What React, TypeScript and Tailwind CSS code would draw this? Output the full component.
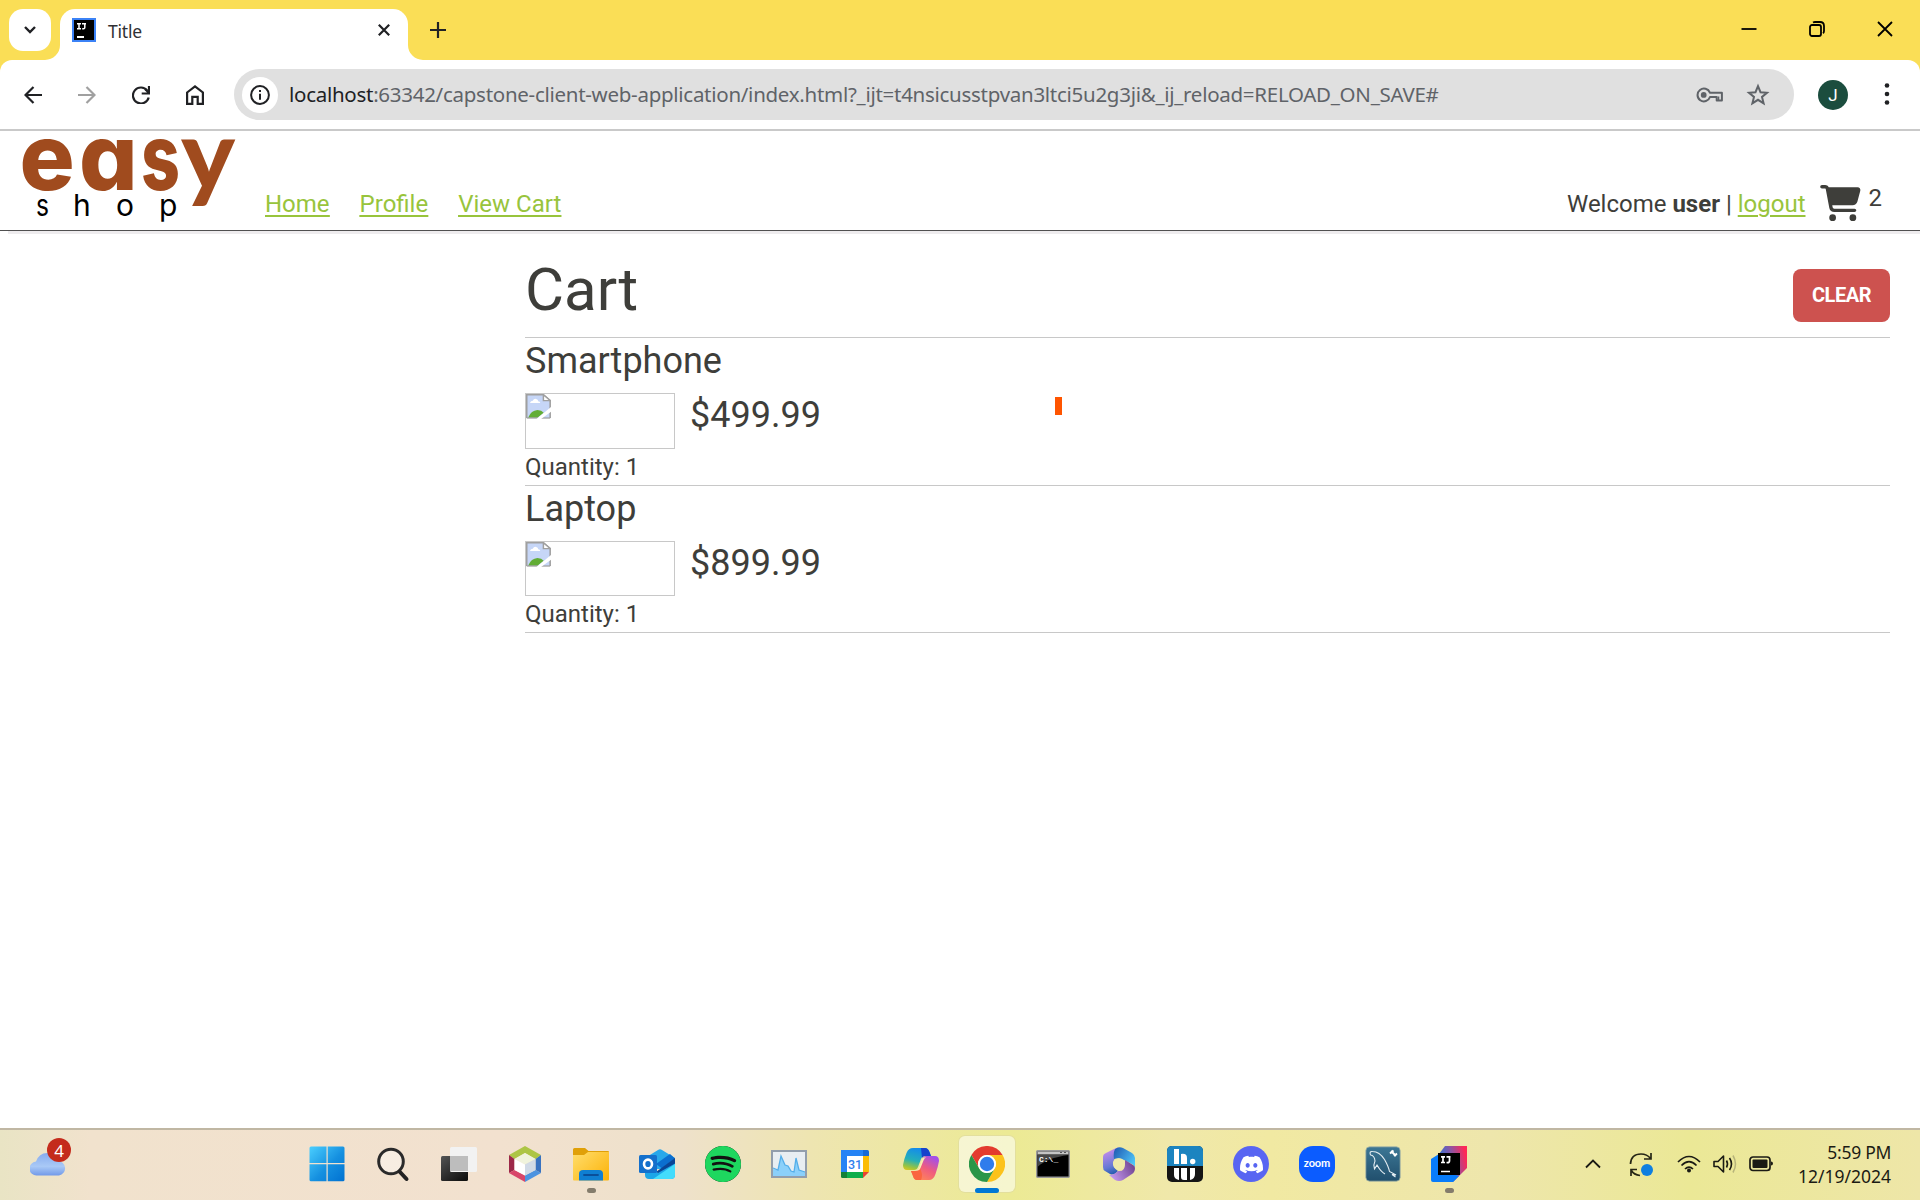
import React from "react";
import { FaCartShopping } from "react-icons/fa6";
import { SiDiscord, SiSpotify } from "react-icons/si";

const Svg = ({ w, h, children, className }: { w: number; h: number; children: React.ReactNode; className?: string }) => (
  <svg width={w} height={h} viewBox={`0 0 ${w} ${h}`} fill="none" className={className ?? "block shrink-0"}>
    {children}
  </svg>
);

function TabStrip() {
  return (
    <div className="flex h-[60px] bg-[#fade56] pl-[9px] pt-[9px]">
      <button className="flex size-[42px] items-center justify-center rounded-[14px] bg-white">
        <Svg w={14} h={10}><path d="M2 2l5 5 5-5" stroke="#202124" strokeWidth="2.4" /></Svg>
      </button>
      <div className="relative ml-[9px] flex h-[51px] w-[348px] rounded-t-[15px] bg-white pl-3">
        <svg className="absolute -left-[15px] bottom-0" width="15" height="15"><path d="M15 0v15H0A15 15 0 0 0 15 0z" fill="#fff" /></svg>
        <svg className="absolute -right-[15px] bottom-0" width="15" height="15"><path d="M0 0v15h15A15 15 0 0 1 0 0z" fill="#fff" /></svg>
        <div className="mt-[9px]">
          <Svg w={24} h={24}>
            <path d="M0 0h24v24H0z" fill="#3b82f6" />
            <path d="M2 2h20v20H2z" fill="#000" />
            <path d="M5 5.700h4M7 5v6M5 10.700h4M10 5.700h4M12.800 5v4.500q0 1.500-2.600 1.300" stroke="#fff" strokeWidth="1.500" />
            <path d="M5 18h7v2H5z" fill="#fff" />
          </Svg>
        </div>
        <span className="ml-3 mt-[10px] font-['Noto_Sans',sans-serif] text-[17.5px] leading-6 tracking-[-0.2px] text-[#303134]">Title</span>
        <div className="ml-auto mr-[17px] mt-[14px]">
          <Svg w={14} h={14}><path d="M1.800 1.800l10.400 10.400M12.200 1.800L1.800 12.200" stroke="#202124" strokeWidth="2.200" /></Svg>
        </div>
      </div>
      <div className="ml-[22px] mt-[13px]">
        <Svg w={16} h={16}><path d="M8 0v16M0 8h16" stroke="#202124" strokeWidth="2.200" /></Svg>
      </div>
      <div className="ml-auto mr-[27px] flex gap-[52px] pt-[12px]">
        <Svg w={16} h={16}><path d="M0.500 8h15" stroke="#000" strokeWidth="1.800" /></Svg>
        <Svg w={16} h={16}>
          <rect x="1" y="4" width="11" height="11" rx="2" stroke="#000" strokeWidth="1.800" />
          <path d="M4 1.600Q5 1 6 1h5q4 0 4 4v5q0 1.500-1 2.200" stroke="#000" strokeWidth="1.800" />
        </Svg>
        <Svg w={16} h={16}><path d="M1 1l14 14M15 1L1 15" stroke="#000" strokeWidth="1.800" /></Svg>
      </div>
    </div>
  );
}

function Toolbar() {
  return (
    <div className="bg-[#fade56]">
      <div className="flex h-[71px] items-start rounded-t-[12px] border-b-2 border-[#c9c9c9] bg-white pt-[9px]">
        <div className="flex h-[51px] items-center gap-9 pl-6">
          <Svg w={18} h={18}><path d="M18 9H2M9.500 1L1.500 9l8 8" stroke="#202124" strokeWidth="2.200" /></Svg>
          <Svg w={18} h={18}><path d="M0 9h16M8.500 1l8 8-8 8" stroke="#a0a0a0" strokeWidth="2.200" /></Svg>
          <Svg w={18} h={18}>
            <path d="M15.300 4.600A8 8 0 1 0 16.700 11.500" stroke="#202124" strokeWidth="2.200" />
            <path d="M17 0v7.500h-7.300M16.500 6.500L13 3" stroke="#202124" strokeWidth="2.200" />
          </Svg>
          <Svg w={18} h={20}>
            <path d="M1.100 7.500L9 1.400l7.900 6.100v11.400h-5.200v-7H6.300v7H1.100z" stroke="#202124" strokeWidth="2.200" />
          </Svg>
        </div>
        <div className="ml-[30px] flex h-[51px] w-[1560px] items-center rounded-full bg-[#e0e0e0] pl-2">
          <div className="flex size-9 items-center justify-center rounded-full bg-white">
            <Svg w={20} h={20}>
              <circle cx="10" cy="10" r="8.900" stroke="#202124" strokeWidth="2" />
              <path d="M10 8.700v6M10 5v2.100" stroke="#202124" strokeWidth="2" />
            </Svg>
          </div>
          <span className="mb-[2px] ml-[11px] whitespace-nowrap font-['Noto_Sans',sans-serif] text-[20.500px] leading-7 tracking-[-0.275px] text-[#5f6368]">
            <span className="text-[#202124]">localhost</span>:63342/capstone-client-web-application/index.html?_ijt=t4nsicusstpvan3ltci5u2g3ji&amp;_ij_reload=RELOAD_ON_SAVE#
          </span>
          <div className="ml-auto flex items-center gap-[22px] pr-[24px]">
            <Svg w={28} h={16}>
              <path d="M13.900 5.700H25.900v7.800h-5.200v-3.500h-6.700a6.400 6.400 0 1 1 -.1-4.300z" stroke="#5f6368" strokeWidth="2" strokeLinejoin="round" />
              <path d="M22.500 9.500v4" stroke="#5f6368" strokeWidth="1.600" />
              <circle cx="7.700" cy="7.900" r="2.900" fill="#5f6368" />
            </Svg>
            <Svg w={24} h={24}>
              <path d="M12 3.200l2.500 6 6.500.5-5 4.200 1.600 6.400L12 16.800l-5.600 3.500L8 13.900 3 9.700l6.500-.5z" stroke="#5f6368" strokeWidth="2" />
            </Svg>
          </div>
        </div>
        <div className="ml-6 mt-[11px] flex size-[30px] items-center justify-center rounded-full bg-[#1b4d3e] text-[17px] leading-none text-white">J</div>
        <div className="ml-[36px] mt-[14px]">
          <Svg w={6} h={22}>
            <circle cx="3" cy="2.500" r="2.300" fill="#202124" /><circle cx="3" cy="11" r="2.300" fill="#202124" /><circle cx="3" cy="19.500" r="2.300" fill="#202124" />
          </Svg>
        </div>
      </div>
    </div>
  );
}

function SiteHeader() {
  return (
    <header className="flex h-[100px] shrink-0 items-start border-b border-[#505050] text-2xl leading-7 shadow-[8px_3px_0_#eeecee]">
      <svg width="240" height="98" viewBox="0 131 240 98" className="shrink-0 overflow-visible font-['Inter',sans-serif]">
        <g fill="#a04b1e" fontSize="92" fontWeight="800" style={{ fontFeatureSettings: '"cv11"' }}>
          <text y="190" x="19.500">e</text><text y="190" x="79">a</text><text y="190" x="141" textLength="39" lengthAdjust="spacingAndGlyphs">s</text>
          <text y="190" x="181" textLength="54" lengthAdjust="spacingAndGlyphs" fontFamily="Lato" fontSize="98" fontWeight="900">y</text>
        </g>
        <g fill="#000" fontSize="30" fontWeight="400">
          <text y="216" x="36" textLength="13" lengthAdjust="spacingAndGlyphs">s</text><text y="216" x="73">h</text><text y="216" x="116">o</text><text y="216" x="159">p</text>
        </g>
      </svg>
      <nav className="ml-[25px] mt-[59px] flex gap-[30px] text-[#98c43c] underline decoration-2 underline-offset-[3px]">
        <a>Home</a><a>Profile</a><a>View Cart</a>
      </nav>
      <div className="ml-auto mr-[38px] flex">
        <span className="mt-[59px] whitespace-pre">Welcome <b className="font-bold">user</b> | <a className="text-[#98c43c] underline decoration-2 underline-offset-[3px]">logout</a></span>
        <FaCartShopping className="ml-[14px] mt-[54px] h-[36px] w-[41px]" />
        <span className="ml-[8px] mt-[53px]">2</span>
      </div>
    </header>
  );
}

const BrokenImage = () => (
  <svg width="25" height="25" viewBox="0 0 24 28" preserveAspectRatio="none" fill="none" className="block">
    <path d="M.700.800h16l6.500 6.500v19.500H.700z" fill="#c6d6f7" />
    <path d="M4 9.500q.500-2 2.500-2 1-2.500 3.200-2 2 .5 2 2.500 2 0 2 2H4z" fill="#fff" />
    <path d="M2 26.500q3-8 9-8.500 4 0 6 3l-6 5.500z" fill="#62ad35" />
    <path d="M.700 27V.800h16l6.500 6.500V27" stroke="#a0a0a0" strokeWidth="1.500" />
    <path d="M16.700.800v6.500h6.500z" fill="#fff" stroke="#a0a0a0" strokeWidth="1.400" />
    <path d="M.700 26.900h22.500" stroke="#a0a0a0" strokeWidth="1.400" />
    <path d="M24 14.500L10 28h4.500L24 20z" fill="#fff" />
  </svg>
);

const items = [
  { name: "Smartphone", price: "$499.99", row: "h-[148px]", box: "h-[56px]" },
  { name: "Laptop", price: "$899.99", row: "h-[147px]", box: "h-[55px]" },
];

function CartPage() {
  return (
    <main className="relative ml-[525px] flex-1 pr-[30px]">
      <div className="flex h-[107px] items-start justify-between border-b border-[#c8c8c8] pt-[23px]">
        <h1 className="text-[60px] leading-[72px]">Cart</h1>
        <button className="mt-[15px] h-[53px] w-[97px] rounded-[8px] bg-[#cd524f] pb-[2px] text-[20px] font-bold tracking-[-0.45px] text-white">CLEAR</button>
      </div>
      {items.map((item) => (
        <div key={item.name} className={`${item.row} border-b border-[#c8c8c8]`}>
          <h2 className="pt-[2px] text-[36px] leading-[42px]">{item.name}</h2>
          <div className="mt-[11px] flex">
            <div className={`${item.box} w-[150px] border border-[#c8c8c8]`}><BrokenImage /></div>
            <span className="ml-[15px] mt-px text-[36px] leading-[42px]">{item.price}</span>
          </div>
          <div className="mt-[4px] text-2xl leading-7">Quantity: 1</div>
        </div>
      ))}
      <div className="absolute left-[530px] top-[166px] h-[18px] w-[7px] bg-[#ff5500]" />
    </main>
  );
}

const apps: { key: string; icon: React.ReactNode; mark?: "dot" | "active" }[] = [
  {
    key: "start",
    icon: (
      <Svg w={36} h={36}>
        <defs><linearGradient id="win" x1="0" y1="0" x2="36" y2="36" gradientUnits="userSpaceOnUse"><stop stopColor="#4cd0ff" /><stop offset=".55" stopColor="#1590e0" /><stop offset="1" stopColor="#0070d0" /></linearGradient></defs>
        <path d="M2 .500h15.500v16.500H.500V2q0-1.500 1.500-1.500zM18.700.500H34q1.500 0 1.500 1.500v15H18.700zM.500 18.300h17v17H2q-1.500 0-1.500-1.500zM18.700 18.300h16.800v15.500q0 1.500-1.500 1.500H18.700z" fill="url(#win)" />
      </Svg>
    ),
  },
  {
    key: "search",
    icon: (
      <Svg w={36} h={36}>
        <circle cx="16" cy="15.500" r="12.300" fill="#fff" fillOpacity=".4" stroke="#2a2a2a" strokeWidth="3" />
        <path d="M24.500 25.500l7 7.500" stroke="#222" strokeWidth="4" strokeLinecap="round" />
      </Svg>
    ),
  },
  {
    key: "taskview",
    icon: (
      <Svg w={36} h={36}>
        <defs><linearGradient id="tv" x1="0" y1="9" x2="20" y2="36" gradientUnits="userSpaceOnUse"><stop stopColor="#555" /><stop offset="1" stopColor="#111" /></linearGradient></defs>
        <rect x="0" y="10" width="27" height="25" rx="1.500" fill="url(#tv)" />
        <rect x="9" y="1" width="27" height="25" rx="1.500" fill="#f2f2f2" />
        <path d="M9 10h18v15H9z" fill="#bdbdbd" />
      </Svg>
    ),
  },
  {
    key: "netbeans",
    icon: (
      <Svg w={34} h={36}>
        <path d="M17 0l16 9-5.500 4L17 7 6.500 13 1 9z" fill="#adc545" />
        <path d="M1 9l5.500 4v11L1 27z" fill="#9c2848" />
        <path d="M1 27l5.500-3L17 29.500V36z" fill="#d8466a" />
        <path d="M33 27l-5.500-3L17 29.500V36z" fill="#4c93e0" />
        <path d="M33 9l-5.500 4v11l5.500 3z" fill="#3872c0" />
        <path d="M17 7l10.500 6L17 18.500 6.500 13z" fill="#f0f3dc" />
        <path d="M6.500 13L17 18.500v11L6.500 24z" fill="#fff" />
        <path d="M27.500 13L17 18.500v11L27.500 24z" fill="#d0dae6" />
      </Svg>
    ),
  },
  {
    key: "explorer",
    mark: "dot",
    icon: (
      <Svg w={36} h={36}>
        <defs><linearGradient id="fe" x1="0" y1="4" x2="30" y2="36" gradientUnits="userSpaceOnUse"><stop stopColor="#ffdf70" /><stop offset="1" stopColor="#fcb50e" /></linearGradient></defs>
        <path d="M0 3.500Q0 2 1.500 2H12l3.500 3H35q1 0 1 1v4H0z" fill="#e0a008" />
        <path d="M0 9h11l4-3h21v27.500q0 1-1 1H1q-1 0-1-1z" fill="url(#fe)" />
        <path d="M6 34.500V28q0-4 4-4h16q4 0 4 4v6.500z" fill="#0f7fd2" />
        <path d="M11 29h14" stroke="#0a4f9a" strokeWidth="1.800" strokeLinecap="round" />
      </Svg>
    ),
  },
  {
    key: "outlook",
    icon: (
      <Svg w={36} h={36}>
        <path d="M6 12L19 4q2-1.300 4 0l13 8-14 11H6z" fill="#28a8ea" />
        <path d="M17 18L31 8l5 4.500-13 10z" fill="#0b6fd0" />
        <path d="M17 26L36 12v8l-14 9z" fill="#0a4596" />
        <path d="M6 19l13 8 17-9.500V29q0 4-4 4H10q-4 0-4-4z" fill="#1ca6e8" />
        <path d="M14 33l22-15v11q0 4-4 4z" fill="#43dcfc" />
        <rect x="0" y="9" width="18" height="18" rx="1.500" fill="#1470cc" />
        <ellipse cx="9" cy="18" rx="4" ry="4.400" stroke="#fff" strokeWidth="2.600" />
      </Svg>
    ),
  },
  { key: "spotify", icon: <div className="rounded-full bg-[#121212]"><SiSpotify className="size-9 text-[#1ed75f]" /></div> },
  {
    key: "monitor",
    icon: (
      <Svg w={36} h={36}>
        <rect x="1" y="5" width="34" height="26" fill="#e8eef2" stroke="#929eac" strokeWidth="2" />
        <path d="M2 30v-7l5 1 3-14 4 9 3 1 3 5 3 1 2-14 3 12 6 2v4z" fill="#8bd0fa" />
        <path d="M2 22l5 2 3-14 4 9 3 1 3 5 3 1 2-14 3 12 6 2" stroke="#54aee9" strokeWidth="1.300" />
      </Svg>
    ),
  },
  {
    key: "calendar",
    icon: (
      <Svg w={30} h={30}>
        <path d="M1.500 1H23v6H1v-4.500Q1 1 1.500 1z" fill="#2583f5" /><path d="M1 1h6v22H1z" fill="#2583f5" />
        <path d="M23 1h4.500Q29 1 29 2.500V7h-6z" fill="#1769d8" /><path d="M23 7h6v16h-6z" fill="#fbbc04" />
        <path d="M1 23h6v6H2.500Q1 29 1 27.500z" fill="#148038" /><path d="M7 23h16v6H7z" fill="#0fae4c" /><path d="M23 23h6l-6 6z" fill="#ea4335" />
        <path d="M7 7h16v16H7z" fill="#fff" />
        <text x="15" y="19.500" textAnchor="middle" fontSize="12.500" fontWeight="500" fill="#3080ec" fontFamily="Roboto">31</text>
      </Svg>
    ),
  },
  {
    key: "copilot",
    icon: (
      <Svg w={36} h={36}>
        <defs>
          <linearGradient id="cp1" x1="12" y1="2" x2="6" y2="26" gradientUnits="userSpaceOnUse"><stop stopColor="#148cea" /><stop offset=".5" stopColor="#25b0b8" /><stop offset=".8" stopColor="#9bc43e" /><stop offset="1" stopColor="#f0c818" /></linearGradient>
          <linearGradient id="cp2" x1="30" y1="11" x2="18" y2="34" gradientUnits="userSpaceOnUse"><stop stopColor="#a450e8" /><stop offset=".5" stopColor="#ee5c80" /><stop offset="1" stopColor="#ff8458" /></linearGradient>
        </defs>
        <path d="M10 2h12q3 0 4.500 4l1.500 4h-6q-3 0-4 3l-3 8q-1 3-4 3H4Q0 24 0 19q1-6 3.500-12Q5.500 2 10 2z" fill="url(#cp1)" />
        <path d="M18 2h4q3 0 4.500 4l1.500 4h-6q-2 0-3 2z" fill="#1742cc" />
        <path d="M26 34H14q-3 0-4-4l-2-5h4q3 0 4-3l3-8q1-4 4-4h9q4 0 4 5-1 6-3.500 13Q30.500 34 26 34z" fill="url(#cp2)" />
        <path d="M18 34h-4q-3 0-4-4l-2-5h5q3 0 4-3 2 5 2 7 0 3-1 5z" fill="#fa6540" />
        <path d="M20 11.500h3.500q-2 0-3 3l-3 7.500q-1 2.500-3 2.500H12q3 0 4-3l2.500-7.500q.500-1.500 1.500-2.500z" fill="#f7f1b0" />
      </Svg>
    ),
  },
  {
    key: "chrome",
    mark: "active",
    icon: (
      <Svg w={36} h={36}>
        <path d="M2.400 9A18 18 0 0 1 33.600 9H18a9 9 0 0 0-7.800 13.500z" fill="#e33b2e" />
        <path d="M33.600 9A18 18 0 0 1 18 36l7.800-13.500A9 9 0 0 0 18 9z" fill="#fcc21b" />
        <path d="M18 36A18 18 0 0 1 2.400 9l7.800 13.500A9 9 0 0 0 25.800 22.500z" fill="#2a9648" />
        <circle cx="18" cy="18" r="9" fill="#fff" /><circle cx="18" cy="18" r="7.200" fill="#2f7cec" />
      </Svg>
    ),
  },
  {
    key: "terminal",
    icon: (
      <Svg w={34} h={28}>
        <rect x=".7" y=".7" width="32.600" height="26.600" rx="1" fill="#000" stroke="#9a9a9a" strokeWidth="1.400" />
        <path d="M1.500 1.500h31v3h-31z" fill="#c4c4c4" /><path d="M24 2.500h2m2 0h2" stroke="#555" strokeWidth="1.200" />
        <path d="M1.500 5h31q-22 3-31 12z" fill="#484848" />
        <text x="3" y="11.500" fontSize="8" fontWeight="bold" fill="#fff" fontFamily="Liberation Mono">C:\_</text>
      </Svg>
    ),
  },
  {
    key: "m365",
    icon: (
      <Svg w={32} h={34}>
        <defs>
          <linearGradient id="m1" x1="4" y1="6" x2="12" y2="28" gradientUnits="userSpaceOnUse"><stop stopColor="#b488e8" /><stop offset=".6" stopColor="#6579d4" /><stop offset="1" stopColor="#1858a8" /></linearGradient>
          <linearGradient id="m2" x1="12" y1="4" x2="32" y2="16" gradientUnits="userSpaceOnUse"><stop stopColor="#2464b8" /><stop offset="1" stopColor="#50c8fa" /></linearGradient>
          <linearGradient id="m3" x1="8" y1="32" x2="30" y2="20" gradientUnits="userSpaceOnUse"><stop stopColor="#c79cf2" /><stop offset="1" stopColor="#764a98" /></linearGradient>
        </defs>
        <path d="M11 2l5-2q-4 5-4 11l-2 4q-1 5 5 9-4 5-8 3l-5-3q-2-1-2-4V10Q0 7 3 6z" fill="url(#m1)" />
        <path d="M12 2q4-3 8-1l9 5q3 2 3 5v9q-2-3-5-4l-6-3q-4-3-10-1-1-6 1-10z" fill="url(#m2)" />
        <path d="M6 28q5 0 9-4 7 1 7-7v-4l8 5q2 1 2 3 0 4-3 6l-9 6q-4 2-8 0z" fill="url(#m3)" />
        <circle cx="16" cy="17" r="5.800" fill="#efe9aa" />
      </Svg>
    ),
  },
  {
    key: "bars",
    icon: (
      <Svg w={36} h={36}>
        <rect width="36" height="36" rx="5" fill="#151515" />
        <path d="M0 5q0-5 5-5h26q5 0 5 5v15H0z" fill="#1c84c0" />
        <path d="M7 3h5v15H7zM14 8q6-1 6 4v6h-6z" fill="#fff" /><circle cx="25.700" cy="15.500" r="2.700" fill="#fff" />
        <path d="M7 22h5v12q-5-1-5-5zM14 22h6v12h-3q-3 0-3-3zM23 22h5v6q0 5-5 6z" fill="#fff" />
      </Svg>
    ),
  },
  { key: "discord", icon: <div className="flex size-9 items-center justify-center rounded-full bg-[#5865f2]"><SiDiscord className="size-[23px] text-white" /></div> },
  { key: "zoom", icon: <div className="flex size-9 items-center justify-center rounded-[14px] bg-[#0b5cff] pb-[3px] font-['Lato',sans-serif] text-[11px] font-bold leading-none tracking-[-0.1px] text-white">zoom</div> },
  {
    key: "workbench",
    icon: (
      <Svg w={36} h={36}>
        <defs><linearGradient id="mw" x1="0" y1="0" x2="0" y2="36" gradientUnits="userSpaceOnUse"><stop stopColor="#3d7896" /><stop offset="1" stopColor="#204e6c" /></linearGradient></defs>
        <rect x=".8" y=".8" width="34.400" height="34.400" rx="4" fill="url(#mw)" stroke="#a8b8a8" strokeWidth=".8" />
        <path d="M5.500 9q-1.500-4 2-3.500 7 0 12 8 4 7 5 12l6.500 3.500-4-.5 3.500 2.500M5.500 9q4 .500 4.500 6-2 4-.500 8l2.500-4q4 7 8 9" stroke="#e4edf2" strokeWidth="1.100" />
        <path d="M26 5l5 5M25 7.500l3.500-3M29 10l3-2.500" stroke="#fff" strokeWidth="2" />
      </Svg>
    ),
  },
  {
    key: "intellij",
    mark: "dot",
    icon: (
      <Svg w={36} h={36}>
        <defs><linearGradient id="ij" x1="8" y1="12" x2="34" y2="6" gradientUnits="userSpaceOnUse"><stop stopColor="#3174d8" /><stop offset=".5" stopColor="#8c55a4" /><stop offset="1" stopColor="#fe2857" /></linearGradient></defs>
        <path d="M14 0h22v22L22 36 5 12z" fill="url(#ij)" />
        <path d="M0 13l8-5 6 18 14 4-6 6H2q-2 0-2-2z" fill="#087cfa" />
        <path d="M7 7h22v22H7z" fill="#000" />
        <path d="M10 10.800h4M12 10v7M10 16.500h4M15.500 10.800h4M18.500 10v5q0 2-3 1.500M10 25.500h9" stroke="#fff" strokeWidth="1.700" />
      </Svg>
    ),
  },
];

function Taskbar() {
  return (
    <footer className="flex h-[72px] border-t-2 border-[#c0b7a3] bg-[linear-gradient(90deg,#e9e4c4_0px,#f1e2cd_90px,#f2e1cf_500px,#eee1cb_680px,#eee5b1_810px,#ecea94_1010px,#f0e8aa_1170px,#f1e9a2_1270px,#eee6ac_1490px,#ebe896_1690px,#eee6a8_1920px)] font-['Noto_Sans',sans-serif]">
      <div className="relative w-[294px] shrink-0 pl-[30px] pt-[22px]">
        <Svg w={36} h={24}>
          <defs><linearGradient id="cl" x1="0" y1="0" x2="0" y2="24" gradientUnits="userSpaceOnUse"><stop stopColor="#84a9ee" /><stop offset=".6" stopColor="#a9c9f6" /><stop offset="1" stopColor="#6f97e8" /></linearGradient></defs>
          <path d="M7 23.500a7 7 0 0 1-1-14Q9 1 17 1q8 0 11 8a7.300 7.300 0 0 1 1 14.500z" fill="url(#cl)" />
        </Svg>
        <div className="absolute left-[47px] top-[8px] flex size-6 items-center justify-center rounded-full bg-[#c42b1c] text-[17px] leading-none text-white">4</div>
      </div>
      {apps.map((app) => (
        <div key={app.key} className="flex w-[66px] shrink-0 justify-center pt-[6px]">
          <div className={app.mark === "active" ? "relative flex size-[56px] items-center justify-center rounded-[6px] bg-white/55 shadow-[0_0_0_1px_#e3df9d]" : "relative flex size-[56px] items-center justify-center"}>
            {app.icon}
            {app.mark === "dot" && <div className="absolute bottom-[-1px] h-[5px] w-[9px] rounded-full bg-[#847c6c]" />}
            {app.mark === "active" && <div className="absolute bottom-[-1px] h-[5px] w-6 rounded-full bg-[#0078d4]" />}
          </div>
        </div>
      ))}
      <div className="ml-auto flex shrink-0 pr-[29px]">
        <div className="mr-[28px] mt-[28px]"><Svg w={16} h={11}><path d="M1 9.500l7-7 7 7" stroke="#1b1b14" strokeWidth="1.800" /></Svg></div>
        <div className="mr-[24px] mt-[22px]">
          <Svg w={24} h={25}>
            <path d="M1.500 12Q2 2 12 2q6 0 9.500 4.500M22 1v6h-7M2 18q3 5 9 5.500M2 24v-6.500h6" stroke="#262616" strokeWidth="1.700" />
            <circle cx="18" cy="18" r="6" fill="#0f7fe0" />
          </Svg>
        </div>
        <div className="mr-[12px] mt-[24px]">
          <Svg w={24} h={19}>
            <path d="M1 8q11-11 22 0M4.500 11.500q7.500-7.500 15 0M8 15q4-4 8 0" stroke="#1b1b14" strokeWidth="1.700" />
            <circle cx="12" cy="16.500" r="2" fill="#1b1b14" />
          </Svg>
        </div>
        <div className="mr-[12px] mt-[24px]">
          <Svg w={24} h={20}>
            <path d="M1 7.500h4l5.500-5.500v16L5 12.500H1z" stroke="#1b1b14" strokeWidth="1.600" strokeLinejoin="round" />
            <path d="M13.500 6.500q2 3.500 0 7M16.500 4q4 6 0 12" stroke="#1b1b14" strokeWidth="1.600" />
            <path d="M20 1.500q5 8.500 0 17" stroke="#b7b47b" strokeWidth="1.500" />
          </Svg>
        </div>
        <div className="mr-[25px] mt-[26px]">
          <Svg w={24} h={16}>
            <rect x="1" y="1" width="20" height="13.500" rx="3" stroke="#1b1b14" strokeWidth="1.700" />
            <rect x="3.500" y="3.500" width="15" height="8.500" rx="1" fill="#1b1b14" /><path d="M22 5.500q2 0 2 2t-2 2z" fill="#1b1b14" />
          </Svg>
        </div>
        <div className="w-[93px] whitespace-nowrap pt-[10px] text-right text-[17.5px] leading-6 tracking-[-0.02px] text-[#1b1b14]">
          <div className="tracking-[-0.3px]">5:59 PM</div>
          <div>12/19/2024</div>
        </div>
      </div>
    </footer>
  );
}

export default function App() {
  return (
    <div className="flex h-[1200px] w-[1920px] flex-col overflow-hidden bg-white font-['Roboto',sans-serif] text-[#3e3e3a]">
      <TabStrip />
      <Toolbar />
      <SiteHeader />
      <CartPage />
      <Taskbar />
    </div>
  );
}
